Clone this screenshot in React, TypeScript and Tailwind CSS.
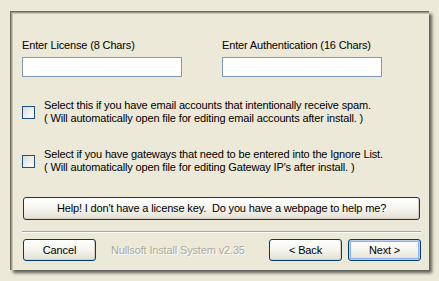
const font = { fontFamily: '"Liberation Sans", Arial, sans-serif' }

function XpButton({ label, className = "", primary = false }: { label: string; className?: string; primary?: boolean }) {
  return (
    <button
      className={
        "h-[22px] rounded-[3px] border border-[#003C74] bg-gradient-to-b from-[#FFFFFF] via-[#F5F4EE] to-[#E3E0D3] text-[11px] tracking-[-0.15px] text-black leading-none " +
        (primary ? "shadow-[inset_0_0_0_1px_#BCD0F4,inset_0_0_0_2px_#8EAEEC] " : "shadow-[inset_-1px_-1px_0_#D6D0C5] ") +
        className
      }
    >
      {label}
    </button>
  )
}

function CheckRow({ line1, line2 }: { line1: string; line2: string }) {
  return (
    <div className="flex items-center">
      <div className="w-[13px] h-[13px] border border-[#1C5180] bg-gradient-to-br from-[#DCDBD5] to-[#FFFFFF] shrink-0" />
      <div className="ml-[9px] text-[11px] tracking-[-0.15px] leading-[13px] text-black">
        <div>{line1}</div>
        <div>{line2}</div>
      </div>
    </div>
  )
}

export default function App() {
  return (
    <div className="w-[439px] h-[281px] bg-[#ECE9D8] pt-[11px] pl-[10px]" style={font}>
      <div className="w-[419px] h-[259px] bg-[#ECE9D8] border-l-[1px] border-t-[1px] border-[#6F6D62] shadow-[inset_1px_1px_0_#9D9A8C,inset_2px_2px_0_#C9C6B6,3px_3px_3px_rgba(0,0,0,0.6)] pl-[11px] pr-[8px] pt-[27px] flex flex-col">
        <div className="flex">
          <div className="w-[200px]">
            <div className="text-[11px] tracking-[-0.15px] leading-[13px] text-black">Enter License (8 Chars)</div>
            <div className="mt-[5px] w-[160px] h-[20px] border border-[#7F9DB9] bg-white" />
          </div>
          <div>
            <div className="text-[11px] tracking-[-0.15px] leading-[13px] text-black">Enter Authentication (16 Chars)</div>
            <div className="mt-[5px] w-[160px] h-[20px] border border-[#7F9DB9] bg-white" />
          </div>
        </div>

        <div className="mt-[22px]">
          <CheckRow
            line1="Select this if you have email accounts that intentionally receive spam."
            line2="( Will automatically open file for editing email accounts after install. )"
          />
        </div>
        <div className="mt-[23px]">
          <CheckRow
            line1="Select if you have gateways that need to be entered into the Ignore List."
            line2="( Will automatically open file for editing Gateway IP's after install. )"
          />
        </div>

        <XpButton
          label="Help! I don't have a license key.  Do you have a webpage to help me?"
          className="mt-[23px] ml-[1px] w-[397px] h-[23px] whitespace-pre"
        />

        <div className="mt-[11px] w-[399px] border-t border-[#ACA899] border-b border-b-white" />

        <div className="mt-[6px] ml-[1px] flex items-center">
          <XpButton label="Cancel" className="w-[73px]" />
          <span className="ml-[15px] text-[11px] tracking-[-0.15px] text-[#ACA899] [text-shadow:1px_1px_0_#FFFFFF]">Nullsoft Install System v2.35</span>
          <div className="flex-1" />
          <XpButton label="< Back" className="w-[73px]" />
          <XpButton label="Next >" className="w-[73px] ml-[6px]" primary />
        </div>
      </div>
    </div>
  )
}
